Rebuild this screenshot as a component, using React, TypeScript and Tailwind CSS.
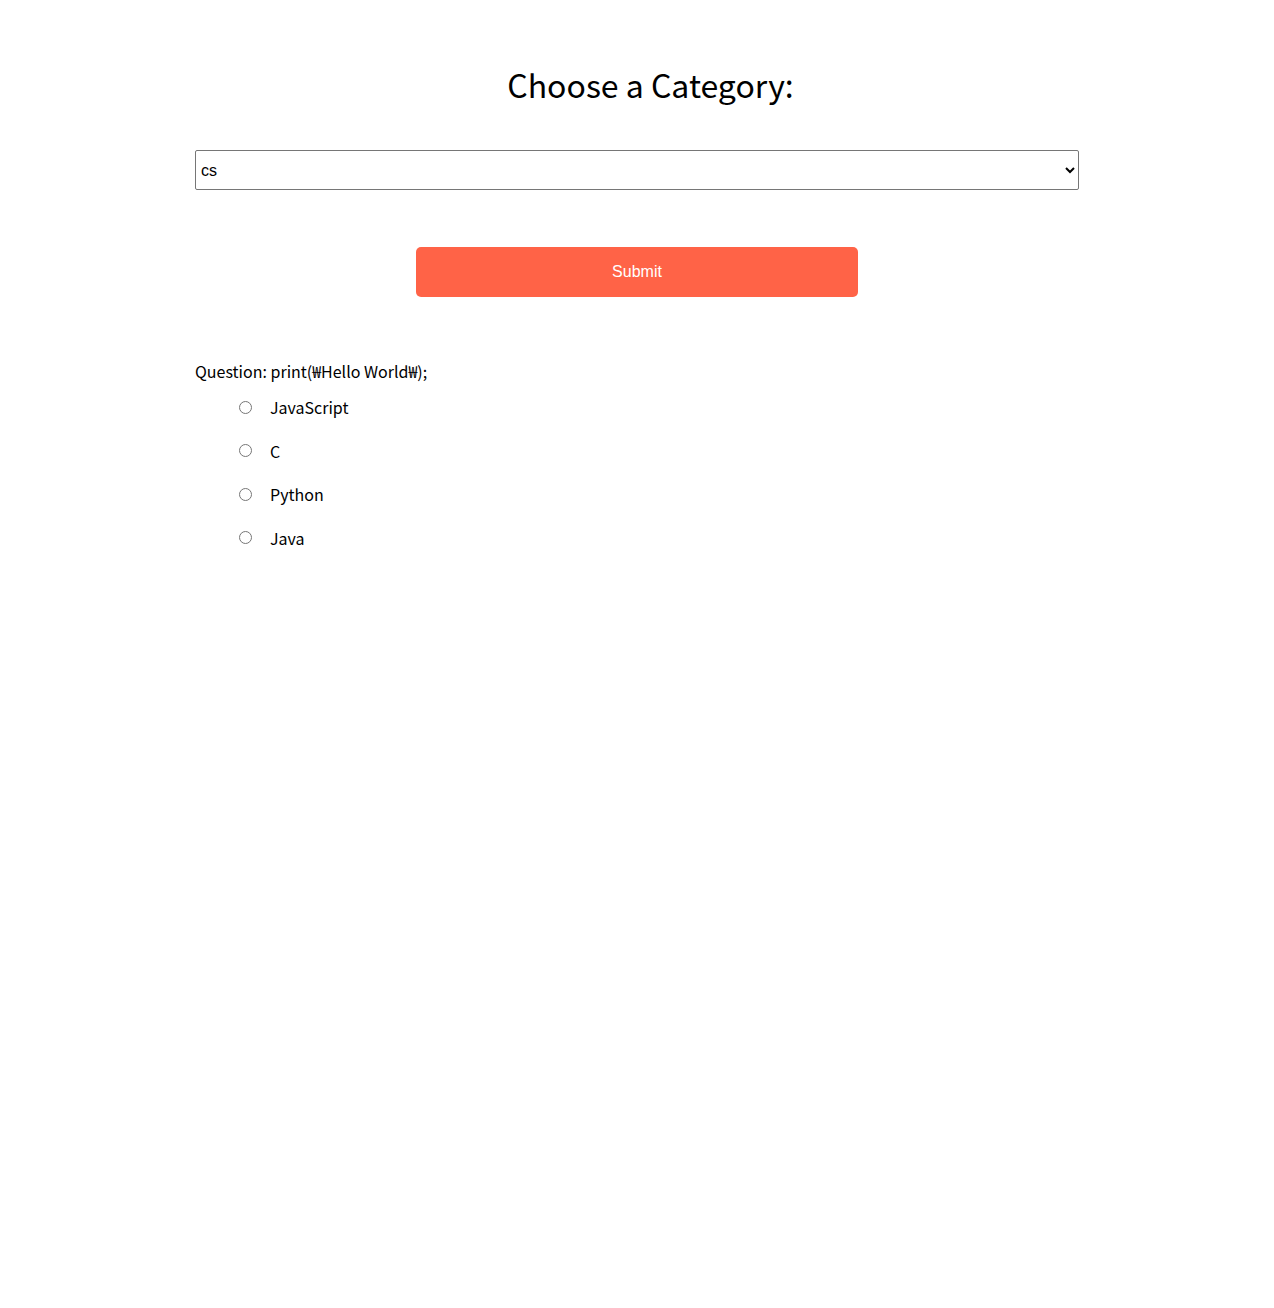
import { useState } from "react";

const options = ["JavaScript", "C", "Python", "Java"];

export default function App() {
  const [category, setCategory] = useState("cs");
  const [answer, setAnswer] = useState("");

  return (
    <div className="min-h-screen bg-white text-black font-['Noto_Sans_CJK_KR','Noto_Sans',sans-serif]">
      <div className="w-[884px] mx-auto pt-[56px]">
        {/* Titulo */}
        <h1 className="text-[32px] leading-[56px] font-normal text-center pl-[27px]">
          Choose a Category:
        </h1>

        {/* Selector */}
        <select
          value={category}
          onChange={(e) => setCategory(e.target.value)}
          className="mt-[38px] w-full h-[40px] border border-[#767676] rounded-[2px] px-[1px] text-[16px] font-['Liberation_Sans',Arial,sans-serif] bg-white"
        >
          <option value="cs">cs</option>
          <option value="math">math</option>
          <option value="science">science</option>
        </select>

        {/* Boton */}
        <div className="flex justify-center mt-[57px]">
          <button className="w-[442px] h-[50px] rounded-[5px] bg-[#ff6347] text-white text-[16px] font-['Liberation_Sans',Arial,sans-serif]">
            Submit
          </button>
        </div>

        {/* Pregunta */}
        <div className="mt-[60px] text-[16px]">
          <p className="leading-[28px]">Question: print(₩Hello World₩);</p>
          <div className="flex flex-col gap-[15.5px] mt-[8px] pl-[44px]">
            {options.map((opt) => (
              <label key={opt} className="flex items-center h-[28px]">
                <input
                  type="radio"
                  name="answer"
                  value={opt}
                  checked={answer === opt}
                  onChange={() => setAnswer(opt)}
                  className="w-[13px] h-[13px] m-0 mr-[18px]"
                />
                <span>{opt}</span>
              </label>
            ))}
          </div>
        </div>
      </div>
    </div>
  );
}
